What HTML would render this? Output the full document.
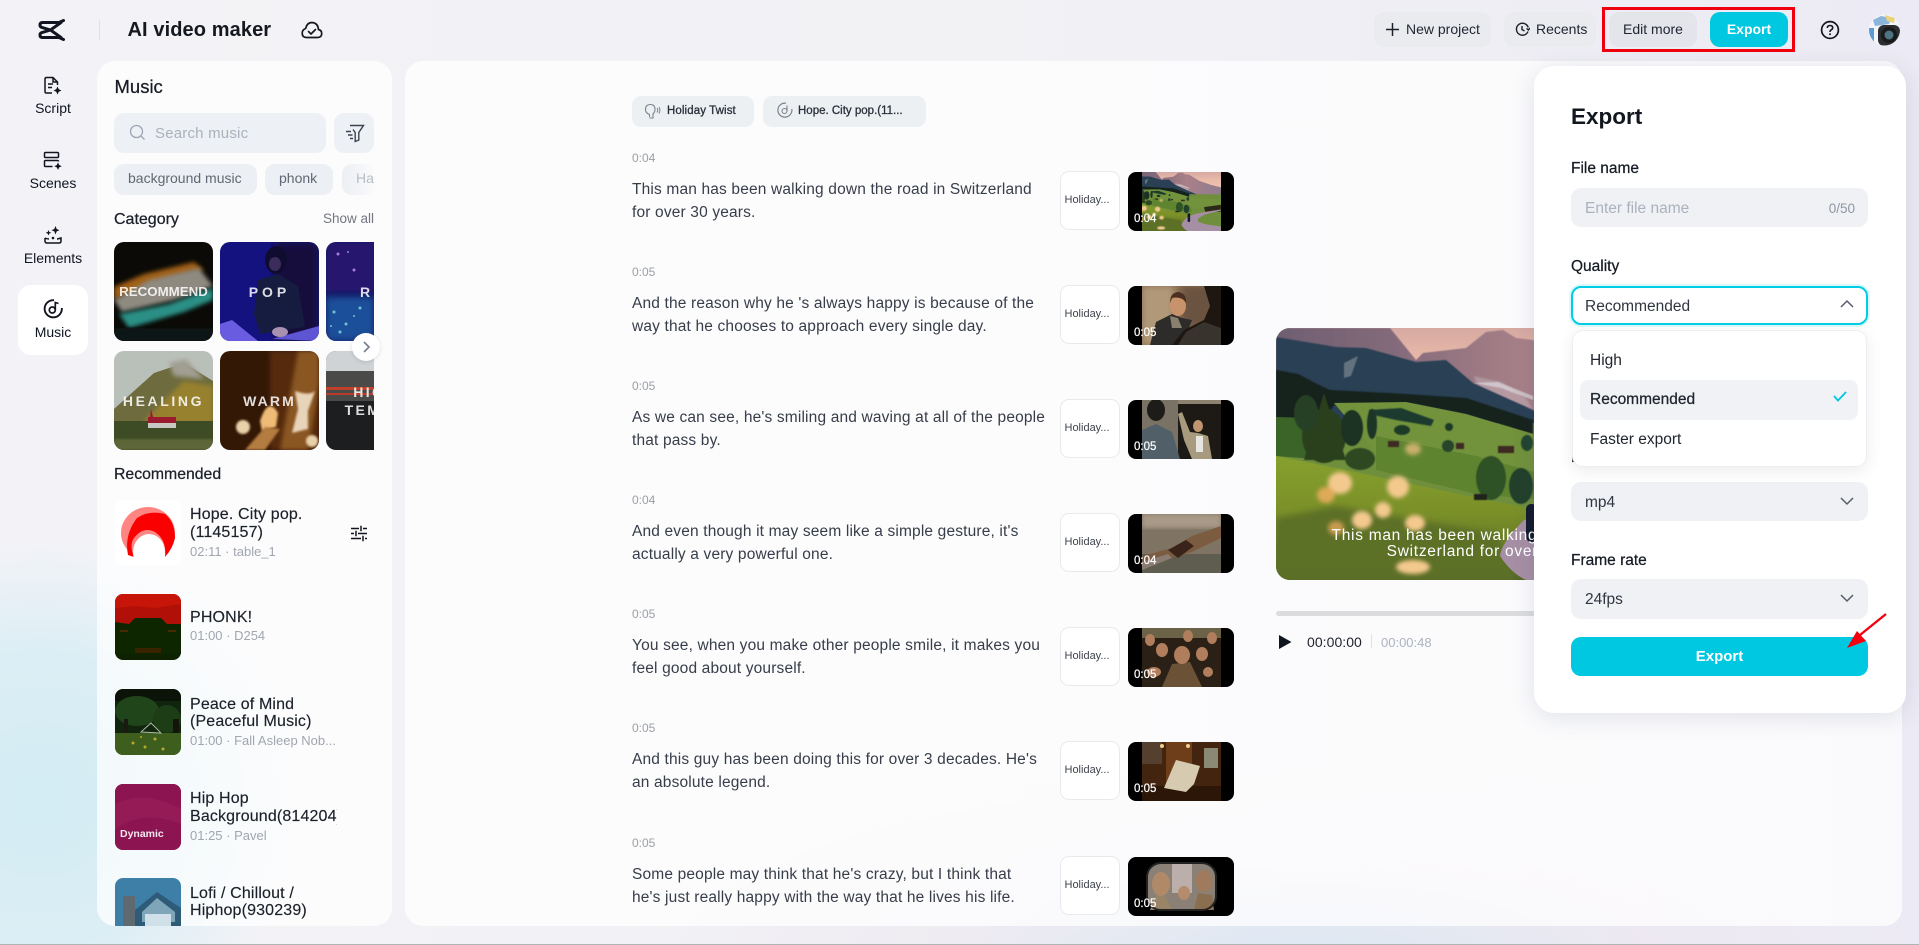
<!DOCTYPE html>
<html lang="en"><head><meta charset="utf-8"><title>AI video maker</title>
<style>
*{box-sizing:border-box}
html,body{margin:0;padding:0}
body{width:1919px;height:945px;position:relative;overflow:hidden;font-family:"Liberation Sans",sans-serif;color:#1b2029;
background:radial-gradient(ellipse 260px 260px at 40px 800px,#d3ecf4 0%,rgba(211,236,244,.75) 55%,rgba(211,236,244,0) 100%),radial-gradient(ellipse 700px 200px at 1300px 960px,#dce8f3 0%,rgba(236,230,240,.6) 50%,rgba(240,240,242,0) 100%),linear-gradient(90deg,#f3f3f7 0%,#f2f2f5 50%,#eceaf4 100%)}
.a{position:absolute}
.m{-webkit-text-stroke:.25px currentColor}
.b{font-weight:700}
.btn{position:absolute;top:12px;height:35px;border-radius:10px;background:#e9ebef;font-size:14px;line-height:35px;text-align:center;color:#1f2530}
.nav{position:absolute;left:18px;width:70px;text-align:center;font-size:14px;color:#0f1520}
.nav svg{display:block;margin:0 auto 5px}
.panel{position:absolute;background:rgba(255,255,255,.72);border-radius:18px;overflow:hidden}
.tag{position:absolute;top:103px;height:31px;border-radius:10px;background:#eceff3;font-size:14px;line-height:29px;color:#606875;padding-left:14px}
.cat{position:absolute;width:99px;height:99px;border-radius:10px;overflow:hidden}
.cat svg{display:block}
.cat span{position:absolute;left:0;right:0;top:50%;margin-top:-9px;text-align:center;color:#fff;opacity:.85;font-weight:700;font-size:14px;line-height:18px;white-space:nowrap}
.song{position:absolute;left:18px;width:280px;height:66px}
.song .t{position:absolute;left:0;top:0;width:66px;height:66px;border-radius:8px;overflow:hidden;background:#fff}
.song .n{position:absolute;left:75px;width:147px;font-size:16px;line-height:18px;letter-spacing:.15px;color:#1b2029;overflow:hidden;white-space:nowrap;-webkit-text-stroke:.15px currentColor}
.song .s{position:absolute;left:75px;font-size:13px;line-height:16px;color:#a0a6b0;white-space:nowrap}
.row{position:absolute;left:227px;width:620px;height:90px}
.row .tm{position:absolute;left:0;top:0;font-size:12px;line-height:16px;color:#9a9fa6}
.row .tx{position:absolute;left:0;top:28px;font-size:15.500px;line-height:23px;color:#373d49;white-space:nowrap;letter-spacing:.16px}
.row .bx{position:absolute;left:427.500px;top:21px;width:60px;height:59px;border:1px solid #e8eaed;border-radius:9px;background:#fff;font-size:11px;line-height:57px;text-align:left;padding-left:4px;color:#3f444d;white-space:nowrap}
.row .th{position:absolute;left:496px;top:22px;width:106px;height:59px;border-radius:8px;overflow:hidden;background:#000}
.row .th svg{position:absolute;left:14px;top:0}
.row .th span{position:absolute;left:6px;bottom:5px;color:#fff;font-size:11.500px;line-height:14px;-webkit-text-stroke:.2px #fff}
.chip{position:absolute;top:35px;height:31px;border-radius:9px;background:#edf0f3;font-size:11.500px;line-height:31px;color:#2a303a}
.lab{position:absolute;left:37px;font-size:15.500px;line-height:18px;color:#161b24}
.sel{position:absolute;left:37px;width:297px;height:39px;border-radius:10px;background:#eff1f5;font-size:15.500px;line-height:41px;padding-left:14px;color:#30363f}
.chev{position:absolute;right:14px;top:14px}
</style></head><body>

<svg width="0" height="0" style="position:absolute"><defs>
<filter id="bl1"><feGaussianBlur stdDeviation="1"/></filter>
<filter id="bl3"><feGaussianBlur stdDeviation="3.500"/></filter>
<filter id="bl2"><feGaussianBlur stdDeviation="2"/></filter>
<filter id="bl05"><feGaussianBlur stdDeviation=".6"/></filter>
<linearGradient id="sky" x1="0" y1="0" x2="0" y2="1"><stop offset="0" stop-color="#d6a9a2"/><stop offset=".12" stop-color="#e8b9a8"/><stop offset=".3" stop-color="#f2c6ae"/><stop offset="1" stop-color="#f2c6ae"/></linearGradient>
<linearGradient id="rock" x1="0" y1="0" x2="1" y2="0"><stop offset="0" stop-color="#6f5f72"/><stop offset=".25" stop-color="#826a7a"/><stop offset=".55" stop-color="#a88088"/><stop offset="1" stop-color="#857a92"/></linearGradient>
<linearGradient id="fore" x1="0" y1="0" x2="0" y2="1"><stop offset="0" stop-color="#86a02e"/><stop offset=".45" stop-color="#7b9028"/><stop offset="1" stop-color="#56682a"/></linearGradient>
<symbol id="land" viewBox="0 0 448 252" preserveAspectRatio="xMidYMid slice">
<rect width="448" height="252" fill="url(#sky)"/>
<path d="M0 0H114L140 32L147 25L190 20L200 12L210 4L227 2L240 10L257 12L300 38L350 55L448 80V140H0Z" fill="url(#rock)" filter="url(#bl05)"/>
<path d="M197 48L225 54L250 70L257 82L205 62Z" fill="#cdbcc2" opacity=".45" filter="url(#bl1)"/>
<path d="M0 9L60 19L90 20L140 34L170 32L197 55L257 82L300 100L448 108V135H0Z" fill="#2c3f55" filter="url(#bl05)"/>
<path d="M68 35L82 28L75 48L68 50Z" fill="#8a949c" opacity=".6" filter="url(#bl05)"/>
<path d="M197 55L225 60L257 72L257 68L222 54Z" fill="#d8d4d8" opacity=".75" filter="url(#bl05)"/>
<rect x="0" y="95" width="448" height="157" fill="#6f8f3c"/>
<path d="M0 42L22 46L45 58L54 62L130 66L190 70L257 92L257 106L190 86L140 76L60 75L40 100L0 90Z" fill="#13221b" filter="url(#bl05)"/>
<path d="M58 75L130 74L190 86L257 106L448 124V165L257 150L100 125Z" fill="#72923c"/>
<path d="M93 82L125 80L158 92L155 98L120 92L93 86Z" fill="#1b3a2e" filter="url(#bl05)"/>
<path d="M0 89L35 90L50 132L0 128Z" fill="#3a6428"/>
<path d="M100 108L200 128L262 145L268 172L200 166L100 142Z" fill="#5f8430"/>
<path d="M0 128L70 142L197 169L262 182L258 252H0Z" fill="url(#fore)"/>
<g filter="url(#bl05)"><path d="M48 65L70 132H28Z" fill="#2a3f1e"/><ellipse cx="48" cy="108" rx="22" ry="27" fill="#2c401f"/><ellipse cx="30" cy="85" rx="12" ry="18" fill="#263f26"/><ellipse cx="76" cy="100" rx="11" ry="18" fill="#1a3020"/><ellipse cx="96" cy="96" rx="5" ry="15" fill="#1c3526"/><ellipse cx="84" cy="131" rx="15" ry="11" fill="#2d4a22"/>
<ellipse cx="126" cy="102" rx="8" ry="5" fill="#1e3a28"/><ellipse cx="173" cy="99" rx="4" ry="4" fill="#1e3a28"/><ellipse cx="172" cy="118" rx="6" ry="6" fill="#25452a"/><ellipse cx="215" cy="150" rx="15" ry="22" fill="#2f5127"/><ellipse cx="245" cy="158" rx="12" ry="18" fill="#21402a"/><ellipse cx="251" cy="115" rx="6" ry="8" fill="#24452f"/>
<rect x="112" y="113" width="11" height="6" fill="#3c2a22"/><rect x="180" y="115" width="8" height="6" fill="#3c2a22"/><rect x="222" y="118" width="16" height="7" fill="#3c2a22"/><rect x="198" y="166" width="13" height="6" fill="#24201c"/></g>
<path d="M0 190L60 178L140 192L220 205L240 252H0Z" fill="#5c7026" filter="url(#bl3)"/>
<path d="M320 150L392 140V170L325 170Z" fill="#2a2a18" filter="url(#bl1)"/>
<path d="M248 192Q225 215 224 228Q235 245 250 252H392V232Q320 225 295 212Q285 198 330 180L392 165V160Q320 170 280 180Z" fill="#a68fa4"/>
<rect x="250" y="176" width="11" height="38" rx="5" fill="#121a2c"/>
<g filter="url(#bl2)" fill="#f4c98e"><ellipse cx="64" cy="155" rx="12" ry="11"/><ellipse cx="122" cy="159" rx="11" ry="11"/><ellipse cx="50" cy="167" rx="9" ry="8" fill="#deaa58"/><ellipse cx="107" cy="182" rx="8" ry="8"/><ellipse cx="86" cy="192" rx="10" ry="9"/><ellipse cx="139" cy="195" rx="10" ry="8"/><ellipse cx="137" cy="239" rx="17" ry="7"/><ellipse cx="137" cy="121" rx="8" ry="6" fill="#c9b06c"/><ellipse cx="60" cy="200" rx="8" ry="7" fill="#c89a4e"/></g>
</symbol>
</defs></svg>

<!-- header -->
<svg class="a" style="left:37px;top:18px" width="28" height="24" viewBox="0 0 28 24"><path d="M26.500 2.500L22 4.500H5.500Q3 4.500 3 7V7.500Q3 8.500 4.500 9.300L13.500 12L4.500 14.700Q3 15.500 3 16.500V17Q3 19.500 5.500 19.500H22L26.500 21.500M13.500 12L24 4.500M13.500 12L24 19.500" fill="none" stroke="#12151f" stroke-width="3" stroke-linejoin="round" stroke-linecap="round"/></svg>
<div class="a" style="left:99px;top:20px;width:1px;height:20px;background:#dfe1e6"></div>
<div class="a b" style="left:127.500px;top:17px;font-size:20px;line-height:26px;color:#15191f;letter-spacing:.1px">AI video maker</div>
<svg class="a" style="left:301px;top:21px" width="22" height="18" viewBox="0 0 22 18"><path d="M5.500 16.500H16.500Q20.700 16.500 20.700 12.500Q20.700 9.300 17.500 8.500Q17 2 11 1.500Q6 1.500 4.700 7.500Q1.200 8.700 1.200 12.300Q1.200 16.500 5.500 16.500ZM7.500 10.500L10 13L14.500 8.500" fill="none" stroke="#15191f" stroke-width="1.700" stroke-linejoin="round" stroke-linecap="round"/></svg>

<div class="btn" style="left:1374px;width:117px;text-align:left;padding-left:32px">New project</div>
<svg class="a" style="left:1385px;top:22px" width="15" height="15" viewBox="0 0 15 15"><path d="M7.500 1V14M1 7.500H14" stroke="#1b2029" stroke-width="1.500"/></svg>
<div class="btn" style="left:1504px;width:92px;text-align:left;padding-left:32px">Recents</div>
<svg class="a" style="left:1515px;top:22px" width="15" height="15" viewBox="0 0 15 15"><path d="M13 9.500A6 6 0 1 1 13.200 5.500M7 4V7.500L9.500 9M11.500 6.500L13.500 8L14.800 6" fill="none" stroke="#1b2029" stroke-width="1.400"/></svg>
<div class="btn" style="left:1609px;width:88px;background:#e3e5eb">Edit more</div>
<div class="btn b" style="left:1710px;width:78px;background:#00c8e0;color:#fff">Export</div>
<div class="a" style="left:1602px;top:7px;width:193px;height:45px;border:3px solid #f0000e"></div>
<svg class="a" style="left:1820px;top:20px" width="20" height="20" viewBox="0 0 20 20"><circle cx="10" cy="10" r="8.400" fill="none" stroke="#12151f" stroke-width="1.700"/><path d="M7.300 8Q7.300 5.500 10 5.500Q12.700 5.500 12.700 7.800Q12.700 9.200 11 10Q10 10.600 10 12" fill="none" stroke="#12151f" stroke-width="1.600"/><circle cx="10" cy="14.300" r="1" fill="#12151f"/></svg>
<svg class="a" style="left:1869px;top:14px" width="31" height="32" viewBox="0 0 31 32"><defs><clipPath id="av"><circle cx="15.500" cy="16" r="15.500"/></clipPath></defs><g clip-path="url(#av)"><rect width="31" height="32" fill="#f3f5f8"/><path d="M4 6L12 2L22 4L20 10L6 12Z" fill="#8ab4dc"/><path d="M16 1L26 4L25 9L18 7Z" fill="#e8d27b"/><rect x="9" y="11" width="22" height="21" rx="6" fill="#2b2d30"/><circle cx="20" cy="21" r="8" fill="#181a1c"/><circle cx="20" cy="21" r="4.500" fill="#4d7480"/><rect x="0" y="14" width="5" height="14" fill="#5a9bd4"/></g></svg>

<!-- sidebar -->
<div class="a" style="left:18px;top:285px;width:70px;height:70px;border-radius:13px;background:#fff"></div>
<div class="nav" style="top:76px"><svg width="20" height="19" viewBox="0 0 20 19"><path d="M9 17H3.500Q2 17 2 15.500V3Q2 1.500 3.500 1.500H10L14.500 6V9M10 1.500V6H14.500M5 8H10M5 11.500H9" fill="none" stroke="#12151f" stroke-width="1.500"/><path d="M14.500 10.500L15.800 13.200L18.500 14.500L15.800 15.800L14.500 18.500L13.200 15.800L10.500 14.500L13.200 13.200Z" fill="#12151f"/></svg>Script</div>
<div class="nav" style="top:151px"><svg width="20" height="19" viewBox="0 0 20 19"><rect x="1.500" y="1.500" width="14" height="5" rx="1" fill="none" stroke="#12151f" stroke-width="1.500"/><path d="M9.500 15.500H2.500Q1.500 15.500 1.500 14.500V10.500Q1.500 9.500 2.500 9.500H14.500Q15.500 9.500 15.500 10.500" fill="none" stroke="#12151f" stroke-width="1.500"/><path d="M15 11.500L16.200 14L18.700 15.200L16.200 16.400L15 18.900L13.800 16.400L11.300 15.200L13.800 14Z" fill="#12151f"/></svg>Scenes</div>
<div class="nav" style="top:226px"><svg width="20" height="19" viewBox="0 0 20 19"><path d="M2 12V15Q2 17 4 17H16Q18 17 18 15V12Q14.500 13 14 13M6 13Q4 13 2 12" fill="none" stroke="#12151f" stroke-width="1.500"/><path d="M12.500 0L13.700 3L16.500 4.200L13.700 5.400L12.500 8.500L11.300 5.400L8.500 4.200L11.300 3Z" fill="#12151f"/><path d="M5.500 4L6.300 6L8.300 6.800L6.300 7.600L5.500 9.500L4.700 7.600L2.700 6.800L4.700 6Z" fill="#12151f"/><circle cx="10" cy="12" r="1.300" fill="#12151f"/></svg>Elements</div>
<div class="nav" style="top:299px;"><svg width="20" height="20" viewBox="0 0 20 20"><path d="M11 1.200A8.600 8.600 0 1 0 18.800 9" fill="none" stroke="#12151f" stroke-width="1.900"/><circle cx="9.300" cy="11" r="3" fill="none" stroke="#12151f" stroke-width="1.700"/><path d="M12.300 11V3.500L15.500 4.500" fill="none" stroke="#12151f" stroke-width="1.700"/></svg>Music</div>

<!-- left panel -->
<div class="panel" style="left:97px;top:61px;width:295px;height:865px;background:rgba(255,255,255,.72)">
 <div class="a m" style="left:17.500px;top:14px;font-size:18.500px;line-height:23px;color:#161b24">Music</div>
 <div class="a" style="left:17px;top:52px;width:212px;height:40px;border-radius:10px;background:#edf0f4"></div>
 <svg class="a" style="left:32px;top:63px" width="17" height="17" viewBox="0 0 17 17"><circle cx="7.500" cy="7.500" r="6" fill="none" stroke="#9ea6b3" stroke-width="1.300"/><path d="M12 12L15.500 15.500" stroke="#9ea6b3" stroke-width="1.300"/></svg>
 <div class="a" style="left:58px;top:64px;font-size:15px;line-height:18px;color:#aab1bd;letter-spacing:.2px">Search music</div>
 <div class="a" style="left:237px;top:52px;width:40px;height:40px;border-radius:10px;background:#edf0f4"></div>
 <svg class="a" style="left:248px;top:63px" width="20" height="19" viewBox="0 0 20 19"><path d="M5 1.500H18.500L13.800 8.500V16L10.200 17.500V8.500L8 5.500M1 7.500H6M3 11H7.500M5 14.500H8" fill="none" stroke="#3b4250" stroke-width="1.400"/></svg>
 <div class="tag" style="left:17px;width:143px">background music</div>
 <div class="tag" style="left:168px;width:68px">phonk</div>
 <div class="tag" style="left:245px;width:32px;background:linear-gradient(90deg,#eceff3,#fafafc);color:#b8bdc5;overflow:hidden">Ha</div>
 <div class="a m" style="left:17px;top:149px;font-size:16px;line-height:19px;color:#1b2029">Category</div>
 <div class="a" style="right:18px;top:149px;font-size:13.500px;line-height:18px;color:#72777f">Show all</div>

 <div class="a" style="left:17px;top:181px;width:260px;height:210px;overflow:hidden">
  <div class="cat" style="left:0;top:0"><svg width="99" height="99" viewBox="0 0 99 99"><rect width="99" height="99" fill="#0b0a07"/><path d="M0 45L30 32L80 20L90 28L40 42L0 58Z" fill="#a05f17" filter="url(#bl2)"/><path d="M0 58L35 38L85 26L99 44L60 58L8 70Z" fill="#8f8a80" filter="url(#bl2)"/><path d="M5 72L55 62L99 46V58L70 70L15 86Z" fill="#2a8f85" filter="url(#bl2)"/><rect y="86" width="99" height="13" fill="#071712" filter="url(#bl1)"/></svg><span style="font-size:13.300px;letter-spacing:0">RECOMMEND</span></div>
  <div class="cat" style="left:106px;top:0"><svg width="99" height="99" viewBox="0 0 99 99"><rect width="99" height="99" fill="#14127e"/><rect x="55" width="44" height="99" fill="#120a3e" filter="url(#bl3)"/><ellipse cx="56" cy="18" rx="11" ry="14" fill="#100c30"/><ellipse cx="55" cy="22" rx="6" ry="7" fill="#3b2c5c"/><path d="M34 72L38 38L58 32L78 44L85 85L40 92Z" fill="#151c40"/><path d="M0 82L12 78L38 99H0Z" fill="#6a5ce0"/><path d="M52 97L99 84V99Z" fill="#5d55d4"/><ellipse cx="60" cy="90" rx="8" ry="5" fill="#a890b0"/></svg><span style="letter-spacing:4px">POP</span></div>
  <div class="cat" style="left:212px;top:0"><svg width="99" height="99" viewBox="0 0 99 99"><rect width="99" height="99" fill="#121a66"/><rect width="48" height="50" fill="#27186e" filter="url(#bl2)"/><rect y="55" width="48" height="44" fill="#1e4f9a" filter="url(#bl3)"/><g fill="#6ec3d6"><circle cx="8" cy="70" r="1.500"/><circle cx="20" cy="82" r="1.500"/><circle cx="34" cy="66" r="1.500"/><circle cx="14" cy="90" r="1.500"/><circle cx="5" cy="84" r="1"/><circle cx="28" cy="74" r="1"/></g><g fill="#a87ed8"><circle cx="12" cy="12" r="1.500"/><circle cx="28" cy="28" r="1.500"/><circle cx="22" cy="10" r="1"/></g></svg><span style="text-align:left;padding-left:34px;letter-spacing:4px;left:0;width:99px;right:auto">R&amp;B</span></div>
  <div class="cat" style="left:0;top:109px"><svg width="99" height="99" viewBox="0 0 99 99"><rect width="99" height="99" fill="#b9bfb9"/><path d="M0 58L40 22L70 12L99 30V75H0Z" fill="#6e6c3e"/><path d="M30 70L70 30L99 35V75H45Z" fill="#97802f" filter="url(#bl2)"/><path d="M55 12L72 8L90 28L60 25Z" fill="#a19f92" filter="url(#bl2)"/><rect y="70" width="99" height="29" fill="#3d4c25"/><rect y="88" width="99" height="11" fill="#5c6638" filter="url(#bl1)"/><rect x="34" y="66" width="28" height="6" fill="#9b1b2e"/><rect x="34" y="72" width="28" height="5" fill="#c9c9c4"/><path d="M36 66L37 58L39 66Z" fill="#9b1b2e"/></svg><span style="letter-spacing:2.600px">HEALING</span></div>
  <div class="cat" style="left:106px;top:109px"><svg width="99" height="99" viewBox="0 0 99 99"><rect width="99" height="99" fill="#341806"/><rect x="50" width="49" height="99" fill="#55290c" filter="url(#bl2)"/><path d="M78 0H99V30L95 60L88 99H60Z" fill="#8a5620" filter="url(#bl2)"/><path d="M75 40Q90 45 95 40L88 60L88 78L72 82L78 58Z" fill="#e8d4b8" filter="url(#bl1)"/><path d="M40 70Q48 45 58 62L56 76L42 80Z" fill="#efbb77" filter="url(#bl1)"/><path d="M25 99L45 76L60 78L45 99Z" fill="#b47b3f" filter="url(#bl1)"/><circle cx="23" cy="76" r="7" fill="#e8d0a8" filter="url(#bl1)"/><circle cx="92" cy="90" r="6" fill="#e8d0a8" filter="url(#bl1)"/></svg><span style="letter-spacing:2.100px">WARM</span></div>
  <div class="cat" style="left:212px;top:109px"><svg width="99" height="99" viewBox="0 0 99 99"><rect width="99" height="99" fill="#1d1e1f"/><rect width="99" height="20" fill="#cfd3d6"/><rect y="20" width="99" height="30" fill="#4a4a48"/><rect y="36" width="99" height="3" fill="#c0402a"/><rect y="42" width="99" height="2" fill="#b83a2a"/></svg><span style="letter-spacing:2.400px;top:32px;margin:0;line-height:18px;white-space:pre">HIGH
TEMPO</span></div>
 </div>
 <div class="a" style="left:255px;top:272px;width:28px;height:28px;border-radius:50%;background:#fff;box-shadow:0 1px 5px rgba(0,0,0,.12)"><svg width="28" height="28" viewBox="0 0 28 28"><path d="M12 9L17 14L12 19" fill="none" stroke="#7a8290" stroke-width="1.700"/></svg></div>

 <div class="a m" style="left:17px;top:404px;font-size:15.800px;line-height:19px;color:#1b2029">Recommended</div>

 <div class="song" style="top:439px"><div class="t"><svg width="66" height="66" viewBox="0 0 66 66"><ellipse cx="33" cy="33" rx="27" ry="26" fill="#ff8583"/><path d="M13 55Q9 35 22 18Q34 10 50 14Q60 22 60 38Q58 48 50 57Q52 40 40 32Q28 26 19 38Q14 45 19 57Z" fill="#fa0000"/><ellipse cx="34" cy="52" rx="16" ry="18" fill="#fff"/></svg></div>
  <div class="n" style="top:6px">Hope. City pop.<br>(1145157)</div><div class="s" style="top:44px">02:11 · table_1</div></div>
 <svg class="a" style="left:253px;top:464px" width="18" height="17" viewBox="0 0 18 17"><path d="M1 3.500H9M13 3.500H17M1 8.500H4M8 8.500H17M1 13.500H11M15 13.500H17" stroke="#12151f" stroke-width="1.500"/><path d="M11 .8V6.200M6 5.800V11.200M13 10.800V16.200" stroke="#12151f" stroke-width="1.500"/></svg>

 <div class="song" style="top:533px"><div class="t"><svg width="66" height="66" viewBox="0 0 66 66"><rect width="66" height="66" fill="#0e2100"/><rect width="66" height="32" fill="#b11008"/><path d="M0 0H66V10L40 14L20 12L0 14Z" fill="#c8150a"/><path d="M0 28L14 30L20 24H46L52 30L66 30V60H0Z" fill="#0e2600"/><rect x="20" y="54" width="26" height="5" fill="#3a2400"/><rect x="5" y="36" width="8" height="2" fill="#4a2a00"/><rect x="53" y="36" width="8" height="2" fill="#4a2a00"/></svg></div>
  <div class="n" style="top:15px">PHONK!</div><div class="s" style="top:34px">01:00 · D254</div></div>

 <div class="song" style="top:628px"><div class="t"><svg width="66" height="66" viewBox="0 0 66 66"><rect width="66" height="66" fill="#10240e"/><rect y="0" width="66" height="12" fill="#0a1408"/><ellipse cx="22" cy="22" rx="22" ry="15" fill="#21451a"/><ellipse cx="52" cy="30" rx="14" ry="14" fill="#1c3d16"/><rect x="9" y="30" width="4" height="28" fill="#1a1a10"/><rect x="58" y="30" width="6" height="30" fill="#14130c"/><rect y="44" width="66" height="22" fill="#3d5e1c"/><g fill="#b8a82c"><circle cx="18" cy="54" r="1.500"/><circle cx="30" cy="58" r="1.500"/><circle cx="40" cy="50" r="1.500"/><circle cx="48" cy="60" r="1.500"/><circle cx="26" cy="48" r="1"/></g><path d="M26 43L36 34L46 44Z" fill="none" stroke="#a8b8a0" stroke-width="1"/></svg></div>
  <div class="n" style="top:7px;line-height:17px">Peace of Mind<br>(Peaceful Music)</div><div class="s" style="top:44px">01:00 · Fall Asleep Nob...</div></div>

 <div class="song" style="top:723px"><div class="t" style="background:#8a1650"><svg width="66" height="66" viewBox="0 0 66 66"><rect width="66" height="66" fill="#8c1551"/><path d="M0 20Q30 5 66 25V40Q30 25 0 45Z" fill="#a0255c" opacity=".4"/></svg><span class="a b" style="left:5px;top:43px;font-size:10.500px;line-height:14px;color:#f4e7ef">Dynamic</span></div>
  <div class="n" style="top:6px">Hip Hop<br>Background(814204)</div><div class="s" style="top:44px">01:25 · Pavel</div></div>

 <div class="song" style="top:817px"><div class="t"><svg width="66" height="66" viewBox="0 0 66 66"><rect width="66" height="66" fill="#3e7fa8"/><path d="M20 32L42 14L66 30V66H20Z" fill="#2e5c78"/><path d="M27 34L42 20L60 34V44H27Z" fill="#7fa6b8"/><rect x="8" y="18" width="12" height="48" fill="#5f6a70"/><rect x="30" y="36" width="26" height="12" fill="#cfe0e8"/></svg></div>
  <div class="n" style="top:7px;line-height:17px">Lofi / Chillout /<br>Hiphop(930239)</div></div>
</div>

<!-- main panel -->
<div class="panel" style="left:405px;top:61px;width:1497px;height:865px;background:rgba(255,255,255,.74)">
 <div class="chip" style="left:227px;width:122px"><svg class="a" style="left:12px;top:7px" width="17" height="17" viewBox="0 0 17 17"><path d="M5.500 14V11.500Q1.500 10 1.500 6.500Q1.500 1.500 6.500 1.500Q11 1.500 11 6.500Q11 9 9 11V15H5.500" fill="none" stroke="#7d838d" stroke-width="1.100"/><path d="M13 5Q14.500 7 13 9.500M15 4Q16.800 7 15 10.500" fill="none" stroke="#7d838d" stroke-width="1"/></svg><span class="a m" style="left:35px;top:0;-webkit-text-stroke-width:.3px;white-space:nowrap;letter-spacing:.1px">Holiday Twist</span></div>
 <div class="chip" style="left:358px;width:163px"><svg class="a" style="left:14px;top:6px" width="16" height="16" viewBox="0 0 16 16"><path d="M9 1.200A7 7 0 1 0 14.800 7" fill="none" stroke="#7d838d" stroke-width="1.200"/><circle cx="7.500" cy="9" r="2.500" fill="none" stroke="#7d838d" stroke-width="1.100"/><path d="M10 9V3.500" stroke="#7d838d" stroke-width="1.100"/></svg><span class="a m" style="left:35px;top:0;-webkit-text-stroke-width:.3px;white-space:nowrap">Hope. City pop.(11...</span></div>

 <div class="row" style="top:89px"><div class="tm">0:04</div><div class="tx">This man has been walking down the road in Switzerland<br>for over 30 years.</div><div class="bx">Holiday...</div><div class="th"><svg width="79" height="59"><use href="#land" width="79" height="59"/></svg><span>0:04</span></div></div>

 <div class="row" style="top:203px"><div class="tm">0:05</div><div class="tx">And the reason why he 's always happy is because of the<br>way that he chooses to approach every single day.</div><div class="bx">Holiday...</div><div class="th"><svg width="79" height="59" viewBox="0 0 79 59"><rect width="79" height="59" fill="#8a6e52"/><rect x="0" width="32" height="59" fill="#b09878" filter="url(#bl3)"/><rect x="40" width="39" height="40" fill="#6a5240" filter="url(#bl3)"/><path d="M8 59L14 36L30 28L40 32L50 34L40 59Z" fill="#2e2c2a"/><path d="M28 30L36 32L40 42L30 42Z" fill="#8a8070"/><ellipse cx="36" cy="20" rx="8" ry="10" fill="#c8926a"/><path d="M28 17Q28 6 37 6Q45 8 44 17Q40 10 30 12Z" fill="#4a3020"/><path d="M30 59L42 44L62 34L68 20L62 0H79V59Z" fill="#1e1611"/><path d="M36 59L44 46L62 36L79 42V59Z" fill="#38332c"/></svg><span>0:05</span></div></div>

 <div class="row" style="top:317px"><div class="tm">0:05</div><div class="tx">As we can see, he's smiling and waving at all of the people<br>that pass by.</div><div class="bx">Holiday...</div><div class="th"><svg width="79" height="59" viewBox="0 0 79 59"><rect width="79" height="59" fill="#8c8270"/><rect x="36" y="4" width="43" height="55" fill="#1d1a16"/><rect x="0" y="0" width="36" height="59" fill="#7a7264"/><ellipse cx="14" cy="10" rx="9" ry="11" fill="#1e1c18"/><path d="M0 59V30L14 24L30 32L38 59Z" fill="#505f68"/><ellipse cx="56" cy="26" rx="5" ry="6" fill="#c09470"/><path d="M42 40L36 14L40 12L48 32L56 33L66 36L70 59H50Z" fill="#a89a7e"/><rect x="54" y="36" width="7" height="16" fill="#e8e6e0"/></svg><span>0:05</span></div></div>

 <div class="row" style="top:431px"><div class="tm">0:04</div><div class="tx">And even though it may seem like a simple gesture, it's<br>actually a very powerful one.</div><div class="bx">Holiday...</div><div class="th"><svg width="79" height="59" viewBox="0 0 79 59"><rect width="79" height="59" fill="#7f7463"/><rect width="79" height="14" fill="#a89a86" filter="url(#bl2)"/><rect y="40" width="79" height="19" fill="#5f5c50"/><path d="M0 42L30 34L50 22L79 12V24L50 38L28 44L0 54Z" fill="#7c5c40"/><path d="M26 36L44 26L52 32L36 44Z" fill="#3a241a"/><path d="M0 48L26 40L30 44L0 56Z" fill="#8a7c70"/></svg><span>0:04</span></div></div>

 <div class="row" style="top:545px"><div class="tm">0:05</div><div class="tx">You see, when you make other people smile, it makes you<br>feel good about yourself.</div><div class="bx">Holiday...</div><div class="th"><svg width="79" height="59" viewBox="0 0 79 59"><rect width="79" height="59" fill="#2a2016"/><rect y="0" width="79" height="10" fill="#6b6248"/><path d="M20 59L30 36L48 34L60 59Z" fill="#6b5236"/><g fill="#b07e5c"><ellipse cx="40" cy="27" rx="8" ry="9"/><ellipse cx="20" cy="22" rx="6" ry="7"/><ellipse cx="60" cy="26" rx="6" ry="7"/><ellipse cx="8" cy="12" rx="5" ry="6"/><ellipse cx="46" cy="8" rx="5" ry="6"/><ellipse cx="70" cy="10" rx="5" ry="6"/><ellipse cx="12" cy="44" rx="7" ry="5"/><ellipse cx="66" cy="44" rx="5" ry="5"/></g></svg><span>0:05</span></div></div>

 <div class="row" style="top:659px"><div class="tm">0:05</div><div class="tx">And this guy has been doing this for over 3 decades. He's<br>an absolute legend.</div><div class="bx">Holiday...</div><div class="th"><svg width="79" height="59" viewBox="0 0 79 59"><rect width="79" height="59" fill="#43240f"/><rect x="24" width="26" height="59" fill="#6e3e1a"/><rect x="0" width="20" height="22" fill="#554030"/><rect x="62" y="6" width="14" height="20" fill="#8a8a74"/><rect y="44" width="79" height="15" fill="#2c1608"/><path d="M22 46L34 18L58 24L52 42L44 50Z" fill="#d6cbb0"/><circle cx="20" cy="4" r="2" fill="#f0d090"/><circle cx="46" cy="4" r="2" fill="#f0d090"/></svg><span>0:05</span></div></div>

 <div class="row" style="top:774px"><div class="tm">0:05</div><div class="tx">Some people may think that he's crazy, but I think that<br>he's just really happy with the way that he lives his life.</div><div class="bx">Holiday...</div><div class="th"><svg width="79" height="59" viewBox="0 0 79 59"><rect width="79" height="59" fill="#000"/><rect x="5" y="6" width="69" height="47" rx="14" fill="#8a8076"/><rect x="30" y="6" width="20" height="30" fill="#bcaeaa"/><ellipse cx="19" cy="27" rx="9" ry="12" fill="#b08a68"/><ellipse cx="62" cy="24" rx="8" ry="11" fill="#a07a5c"/><ellipse cx="42" cy="36" rx="6" ry="7" fill="#b48c6c"/><path d="M8 53L14 38L24 40L30 53Z" fill="#9a8468"/><path d="M52 53L56 36L70 38L72 53Z" fill="#8a6e50"/><rect x="5" y="6" width="69" height="47" rx="14" fill="none" stroke="#222" stroke-width="2"/></svg><span>0:05</span></div></div>

 <!-- preview -->
 <div class="a" style="left:871px;top:267px;width:448px;height:252px;border-radius:14px;overflow:hidden;background:#333">
  <svg width="448" height="252" style="display:block"><use href="#land" width="448" height="252"/></svg>
  <div class="a" style="left:0;right:0;top:200px;text-align:center;color:#fff;font-size:15.500px;line-height:15.800px;letter-spacing:.72px">This man has been walking down the road in<br>Switzerland for over 30 years.</div>
 </div>
 <div class="a" style="left:871px;top:550px;width:640px;height:5px;border-radius:3px;background:#dcdcde"></div>
 <svg class="a" style="left:873px;top:574px" width="14" height="14" viewBox="0 0 14 14"><path d="M1 0L13.500 7L1 14Z" fill="#10141d"/></svg>
 <div class="a" style="left:902px;top:572px;font-size:14px;line-height:18px;color:#1d222b;letter-spacing:.05px">00:00:00</div>
 <div class="a" style="left:966px;top:573px;width:1px;height:14px;background:#dfe1e5"></div>
 <div class="a" style="left:976px;top:573px;font-size:13px;line-height:18px;color:#abb3c0">00:00:48</div>
</div>

<!-- export panel -->
<div class="a" style="left:1534px;top:66px;width:372px;height:647px;border-radius:20px;background:#fff;box-shadow:0 4px 24px rgba(60,70,110,.14)">
 <div class="a b" style="left:37px;top:37px;font-size:22.500px;line-height:28px;color:#12161e">Export</div>
 <div class="lab m" style="top:94px">File name</div>
 <div class="sel" style="top:122px;color:#abb2bd">Enter file name<span class="a" style="right:13px;top:0;font-size:13.500px;color:#8f97a3">0/50</span></div>
 <div class="lab m" style="top:192px">Quality</div>
 <div class="sel" style="top:220px;background:#fff;border:2px solid #00cde6;box-shadow:0 0 0 2px rgba(0,205,230,.14);line-height:37px;padding-left:12px">Recommended<svg class="chev" style="right:12px;top:11px" width="14" height="10" viewBox="0 0 14 10"><path d="M1 8L7 2L13 8" fill="none" stroke="#565d68" stroke-width="1.500"/></svg></div>

 <div class="lab m" style="top:383px">Format</div>
 <div class="sel" style="top:416px">mp4<svg class="chev" width="14" height="10" viewBox="0 0 14 10"><path d="M1 2L7 8L13 2" fill="none" stroke="#565d68" stroke-width="1.500"/></svg></div>
 <div class="lab m" style="top:486px">Frame rate</div>
 <div class="sel" style="top:513px;height:40px">24fps<svg class="chev" width="14" height="10" viewBox="0 0 14 10"><path d="M1 2L7 8L13 2" fill="none" stroke="#565d68" stroke-width="1.500"/></svg></div>
 <div class="a b" style="left:37px;top:571px;width:297px;height:39px;border-radius:10px;background:#00c8e0;color:#fff;font-size:15px;line-height:39px;text-align:center">Export</div>

 <div class="a" style="left:38px;top:264px;width:295px;height:137px;border-radius:11px;background:#fff;border:1px solid #eceef1;box-shadow:0 4px 16px rgba(30,40,60,.09)">
  <div class="a" style="left:17px;top:21px;font-size:15.500px;line-height:18px;color:#20252e">High</div>
  <div class="a" style="left:7px;top:49px;width:278px;height:40px;border-radius:8px;background:#f0f2f5"></div>
  <div class="a m" style="left:17px;top:60px;font-size:15.500px;line-height:18px;color:#20252e">Recommended</div>
  <svg class="a" style="left:260px;top:60px" width="14" height="11" viewBox="0 0 14 11"><path d="M1 5L5 9.500L13 1" fill="none" stroke="#00c8e0" stroke-width="1.800"/></svg>
  <div class="a" style="left:17px;top:100px;font-size:15.500px;line-height:18px;color:#20252e">Faster export</div>
 </div>
</div>

<!-- red arrow -->
<svg class="a" style="left:1840px;top:608px" width="52" height="46" viewBox="0 0 52 46"><path d="M46 6L20 27" stroke="#f4000e" stroke-width="2.300"/><path d="M7 40L17 23L26 33Z" fill="#f4000e"/></svg>

<div class="a" style="left:0;top:944px;width:1919px;height:1px;background:#b0b2b6"></div>
</body></html>
